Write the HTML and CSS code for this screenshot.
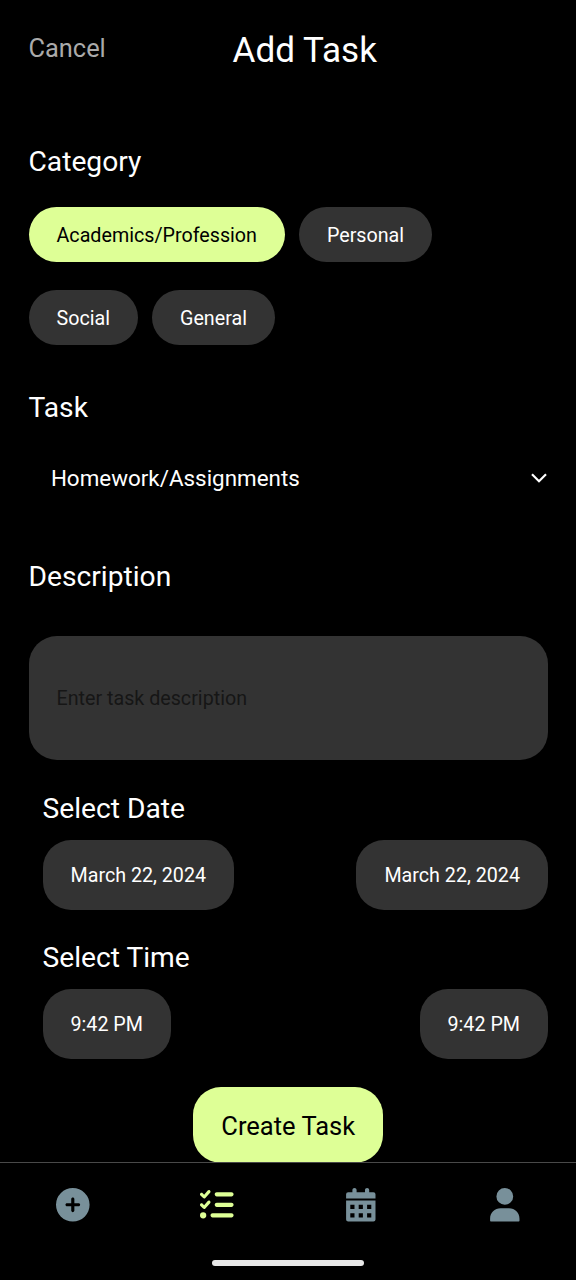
FILE: index.html
```html
<!DOCTYPE html>
<html lang="en">
<head>
<meta charset="utf-8">
<title>Add Task</title>
<link rel="stylesheet" href="styles.css">
</head>
<body>
<div class="screen">
  <header class="header">
    <button class="cancel">Cancel</button>
    <h1 class="title">Add Task</h1>
  </header>
  <main class="form">
    <section class="category">
      <h2 class="heading">Category</h2>
      <div class="chips">
        <button class="chip chip-active">Academics/Profession</button>
        <button class="chip">Personal</button>
        <button class="chip">Social</button>
        <button class="chip">General</button>
      </div>
    </section>
    <section class="task">
      <h2 class="heading">Task</h2>
      <div class="select">
        <span>Homework/Assignments</span>
        <svg class="chevron" viewBox="0 0 18 12"><path d="M2 2.2 9 9.2 16 2.2"/></svg>
      </div>
    </section>
    <section class="description">
      <h2 class="heading">Description</h2>
      <div class="textbox">Enter task description</div>
    </section>
    <section class="range">
      <h2 class="heading">Select Date</h2>
      <div class="range-row">
        <button class="picker">March 22, 2024</button>
        <button class="picker">March 22, 2024</button>
      </div>
    </section>
    <section class="range">
      <h2 class="heading">Select Time</h2>
      <div class="range-row">
        <button class="picker">9:42 PM</button>
        <button class="picker">9:42 PM</button>
      </div>
    </section>
    <button class="create">Create Task</button>
  </main>
  <nav class="tabs">
    <a class="tab"><svg class="icon" viewBox="0 0 512 512"><path fill-rule="evenodd" d="M256 512A256 256 0 1 0 256 0a256 256 0 1 0 0 512zM232 344V280H168c-13.300 0-24-10.700-24-24s10.700-24 24-24h64V168c0-13.300 10.700-24 24-24s24 10.700 24 24v64h64c13.300 0 24 10.700 24 24s-10.700 24-24 24H280v64c0 13.300-10.700 24-24 24s-24-10.700-24-24z"/></svg></a>
    <a class="tab tab-active"><svg class="icon" viewBox="0 0 512 512"><path d="M152.100 38.200c9.900 8.900 10.700 24 1.800 33.900l-72 80c-4.400 4.900-10.600 7.800-17.200 7.900s-12.900-2.400-17.600-7L7 113C-2.300 103.600-2.300 88.400 7 79s24.600-9.400 33.900 0l22.100 22.100 55.100-61.200c8.900-9.900 24-10.700 33.900-1.800zm0 160c9.900 8.900 10.700 24 1.800 33.900l-72 80c-4.400 4.900-10.600 7.800-17.200 7.900s-12.900-2.400-17.600-7L7 273c-9.400-9.400-9.400-24.600 0-33.900s24.600-9.400 33.900 0l22.100 22.100 55.100-61.200c8.900-9.900 24-10.700 33.900-1.800zM224 96c0-17.700 14.300-32 32-32H480c17.700 0 32 14.300 32 32s-14.300 32-32 32H256c-17.700 0-32-14.300-32-32zm0 160c0-17.700 14.300-32 32-32H480c17.700 0 32 14.300 32 32s-14.300 32-32 32H256c-17.700 0-32-14.300-32-32zM160 416c0-17.700 14.300-32 32-32H480c17.700 0 32 14.300 32 32s-14.300 32-32 32H192c-17.700 0-32-14.300-32-32zM48 368a48 48 0 1 1 0 96 48 48 0 1 1 0-96z"/></svg></a>
    <a class="tab"><svg class="icon" viewBox="-32 0 512 512"><path fill-rule="evenodd" d="M128 0c17.700 0 32 14.300 32 32V64H288V32c0-17.700 14.300-32 32-32s32 14.300 32 32V64h64q32 0 32 32v64H0V96q0-32 32-32h64V32c0-17.700 14.300-32 32-32zM0 192H448V480q0 32-32 32H32q-32 0-32-32zM64 256v64h64v-64zM192 256v64h64v-64zM320 256v64h64v-64zM64 384v64h64v-64zM192 384v64h64v-64zM320 384v64h64v-64z"/></svg></a>
    <a class="tab"><svg class="icon" viewBox="-32 0 512 512"><path d="M224 256A128 128 0 1 0 224 0a128 128 0 1 0 0 256zM160 308C70 308 0 378 0 468V500q0 12 12 12H436q12 0 12-12V468C448 378 378 308 288 308z"/></svg></a>
  </nav>
  <div class="home-bar"></div>
</div>
</body>
</html>
```
FILE: styles.css
```css
* {
  box-sizing: border-box;
}

body {
  margin: 0;
  background: #000;
  color: #fff;
  font-family: Roboto, "Liberation Sans", sans-serif;
}

button {
  border: 0;
  padding: 0;
  background: none;
  color: inherit;
  font: inherit;
}

.screen {
  display: flex;
  flex-direction: column;
  width: 576px;
  height: 1280px;
  overflow: hidden;
}

.header {
  display: grid;
  grid-template-columns: 204px 1fr;
  align-items: center;
  height: 99px;
  padding-left: 28.5px;
}

.cancel {
  padding-bottom: 3px;
  color: #aaa;
  font-size: 25.4px;
  text-align: left;
}

.title {
  margin: 0;
  font-size: 35.1px;
  font-weight: 400;
}

.form {
  display: flex;
  flex-direction: column;
  height: 1063px;
  padding: 46px 28px 0 28.5px;
}

.heading {
  margin: 0;
  font-size: 28.2px;
  font-weight: 400;
  line-height: 33px;
}

.chips {
  display: flex;
  flex-wrap: wrap;
  gap: 28px 14px;
  margin-top: 29px;
}

.chip {
  height: 55px;
  padding: 2px 28px 0;
  border-radius: 28px;
  background: #333;
  font-size: 19.7px;
}

.chip-active {
  background: #deff96;
  color: #000;
}

.task {
  margin-top: 46px;
}

.select {
  display: flex;
  align-items: center;
  justify-content: space-between;
  height: 28px;
  margin-top: 40px;
  padding-left: 22.4px;
  font-size: 22.4px;
}

.chevron {
  width: 18px;
  height: 12px;
  fill: none;
  stroke: #fff;
  stroke-width: 2.2;
}

.description {
  margin-top: 68px;
}

.textbox {
  display: flex;
  align-items: center;
  height: 123.5px;
  margin-top: 43px;
  padding: 2px 28px 0;
  border-radius: 28px;
  background: #333;
  color: #161616;
  font-size: 19.7px;
}

.range {
  margin-top: 32.5px;
  padding-left: 14px;
}

.range + .range {
  margin-top: 31.5px;
}

.range-row {
  display: flex;
  justify-content: space-between;
  margin-top: 15px;
}

.picker {
  height: 69.5px;
  padding: 2px 28px 0;
  border-radius: 28px;
  background: #333;
  font-size: 19.7px;
}

.create {
  align-self: center;
  height: 76px;
  margin-top: 28.5px;
  padding: 1px 28.2px 0;
  border-radius: 28px;
  background: #deff96;
  color: #000;
  font-size: 25.5px;
  flex-shrink: 0;
}

.tabs {
  display: grid;
  grid-template-columns: repeat(4, 1fr);
  height: 98px;
  border-top: 1px solid #494949;
}

.tab {
  display: flex;
  justify-content: center;
  padding: 25.3px 0 0 1px;
  color: #78909a;
}

.tab-active {
  color: #deff96;
}

.icon {
  width: 33.6px;
  height: 33.6px;
  overflow: visible;
  fill: currentColor;
}

.home-bar {
  align-self: center;
  width: 152px;
  height: 6px;
  border-radius: 3px;
  background: #e8e8e8;
}
```
